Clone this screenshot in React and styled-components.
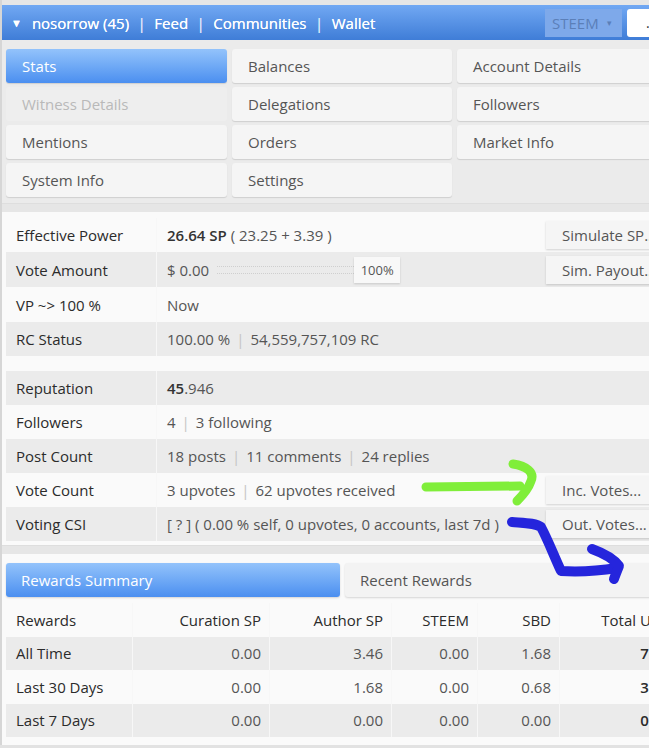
import React from 'react';
import styled, { createGlobalStyle } from 'styled-components';

const GlobalStyle = createGlobalStyle`
  html, body {
    margin: 0;
    padding: 0;
    overflow: hidden;
    background: #e2e2e2;
    font-family: 'Open Sans', 'Noto Sans', sans-serif;
  }
`;

// Page shell - wider than the window, so the right edge gets clipped
const Page = styled.div`
  position: relative;
  width: 684px;
  padding-top: 5px;
  border-left: 2px solid #d6d6d6;
  background: #e6e6e6;
`;

// Top navigation bar
const TopBar = styled.div`
  height: 35px;
  display: flex;
  align-items: center;
  padding: 0 0 0 9px;
  background: linear-gradient(#71a8f3, #3f7dd7);
  color: #fff;
  font-size: 15px;
  white-space: nowrap;
  text-shadow: 0 0 0.4px #fff;
`;

const Caret = styled.span`
  font-size: 11px;
  margin-right: 10px;
`;

const NavLinks = styled.div`
  flex: 1;
  display: flex;
  gap: 8.5px;
`;

const Sep = styled.span`
  color: #cfe0f8;
`;

const ChainSelect = styled.div`
  width: 77px;
  height: 28px;
  display: flex;
  align-items: center;
  justify-content: space-between;
  padding: 0 10px 0 7px;
  box-sizing: border-box;
  background: #7ea9ea;
  color: #5b7fb8;
  font-size: 15px;
  text-shadow: none;
  margin-right: 5px;
`;

const SearchBox = styled.div`
  width: 59px;
  height: 28px;
  box-sizing: border-box;
  background: #fff;
  border-radius: 3px 0 0 3px;
  color: #333;
  font-size: 14px;
  padding-left: 19px;
  line-height: 28px;
  text-shadow: none;
`;

// Menu of sections
const MenuPanel = styled.div`
  display: grid;
  grid-template-columns: 221px 220px 220px;
  grid-auto-rows: 34px;
  gap: 4px 5px;
  padding: 9px 4px 6px;
  background: #ebebeb;
`;

const MenuButton = styled.div`
  display: flex;
  align-items: center;
  padding-left: 16px;
  font-size: 15px;
  border-radius: 3px;
  color: ${props => props.active ? '#fff' : props.disabled ? '#b9b9b9' : '#555'};
  background: ${props => props.active
    ? 'linear-gradient(#93c3fb, #4b8ff0)'
    : props.disabled ? '#eeeeee' : '#f5f5f5'};
  box-shadow: ${props => props.disabled ? 'none' : '0 1px 1px rgba(0,0,0,0.12)'};
`;

const Gutter = styled.div`
  height: 8px;
  background: #e6e6e6;
  border-top: 1px solid #dedede;
`;

const Panel = styled.div`
  background: #fafafa;
  padding: ${props => props.pad || '6px 0 4px 4px'};
`;

const Table = styled.div`
  display: flex;
  flex-direction: column;
  margin-bottom: ${props => props.gap || '0'};
`;

const Row = styled.div`
  display: grid;
  grid-template-columns: ${props => props.cols};
  height: ${props => props.h || '34px'};
  background: ${props => props.shade ? '#ebebeb' : '#fafafa'};
`;

const Cell = styled.div`
  display: flex;
  align-items: center;
  justify-content: ${props => props.right ? 'flex-end' : 'flex-start'};
  padding: 0 ${props => props.right ? '8px' : '0'} 0 10px;
  border-right: 1px solid ${props => props.noLine ? 'transparent' : '#f7f7f7'};
  font-size: 15px;
  white-space: nowrap;
  color: ${props => props.label ? '#2b2b2b' : '#555'};
  font-weight: ${props => props.bold ? 600 : 400};
`;

const Strong = styled.b`
  color: #333;
  font-weight: 600;
`;

const Bar = styled.span`
  color: #c4c4c4;
  margin: 0 6px;
`;

const ValueCell = styled(Cell)`
  justify-content: space-between;
  padding-right: 14px;
  border-right: none;
`;

const ActionButton = styled.div`
  width: 126px;
  height: 28px;
  display: flex;
  align-items: center;
  padding-left: 16px;
  box-sizing: border-box;
  background: #f5f5f5;
  color: #555;
  font-size: 15px;
  box-shadow: 0 1px 2px rgba(0,0,0,0.16);
`;

const SliderWrap = styled.span`
  display: inline-flex;
  align-items: center;
  margin-left: 8px;
`;

const Track = styled.span`
  width: 137px;
  height: 6px;
  border-top: 1px dotted #cfcfcf;
  border-bottom: 1px dotted #cfcfcf;
`;

const Knob = styled.span`
  width: 46px;
  height: 26px;
  display: inline-flex;
  align-items: center;
  justify-content: center;
  background: #f8f8f8;
  box-shadow: 0 1px 2px rgba(0,0,0,0.15);
  font-size: 13px;
  color: #555;
`;

// Tabs for the rewards block
const Tabs = styled.div`
  display: grid;
  grid-template-columns: 334px 334px;
  gap: 5px;
  height: 34px;
  margin-bottom: 6px;
`;

const Tab = styled.div`
  display: flex;
  align-items: center;
  padding-left: 15px;
  font-size: 15px;
  border-radius: 3px;
  color: ${props => props.active ? '#fff' : '#555'};
  background: ${props => props.active ? 'linear-gradient(#93c3fb, #4b8ff0)' : '#f3f3f3'};
  box-shadow: 0 1px 2px rgba(0,0,0,0.15);
`;

// Hand-drawn marker strokes on top of the page
const Scribble = styled.svg`
  position: absolute;
  left: -2px;
  top: 0;
  pointer-events: none;
`;

const statsCols = '151px 1fr';
const rewardCols = '127px 137px 122px 86px 82px 119px';

const menu = [
  ['Stats', 'active'], ['Balances'], ['Account Details'],
  ['Witness Details', 'disabled'], ['Delegations'], ['Followers'],
  ['Mentions'], ['Orders'], ['Market Info'],
  ['System Info'], ['Settings'], null,
];

const rewards = [
  ['All Time', '0.00', '3.46', '0.00', '1.68', '7.12'],
  ['Last 30 Days', '0.00', '1.68', '0.00', '0.68', '3.55'],
  ['Last 7 Days', '0.00', '0.00', '0.00', '0.00', '0.00'],
];

export default function App() {
  return (
    <>
      <GlobalStyle />
      <Page>
        <TopBar>
          <Caret>▼</Caret>
          <NavLinks>
            <span>nosorrow (45)</span><Sep>|</Sep>
            <span>Feed</span><Sep>|</Sep>
            <span>Communities</span><Sep>|</Sep>
            <span>Wallet</span>
          </NavLinks>
          <ChainSelect>STEEM <span style={{ fontSize: 9 }}>▾</span></ChainSelect>
          <SearchBox>.</SearchBox>
        </TopBar>

        <MenuPanel>
          {menu.map((m, i) => m
            ? <MenuButton key={i} active={m[1] === 'active'} disabled={m[1] === 'disabled'}>{m[0]}</MenuButton>
            : <div key={i} />)}
        </MenuPanel>
        <Gutter />

        <Panel>
          <Table gap="15px">
            <Row cols={statsCols}>
              <Cell label>Effective Power</Cell>
              <ValueCell>
                <span><Strong>26.64 SP</Strong> ( 23.25 + 3.39 )</span>
                <ActionButton>Simulate SP...</ActionButton>
              </ValueCell>
            </Row>
            <Row cols={statsCols} shade h="35px">
              <Cell label>Vote Amount</Cell>
              <ValueCell>
                <span style={{ display: 'flex', alignItems: 'center' }}>
                  $ 0.00
                  <SliderWrap><Track /><Knob>100%</Knob></SliderWrap>
                </span>
                <ActionButton>Sim. Payout...</ActionButton>
              </ValueCell>
            </Row>
            <Row cols={statsCols} h="35px">
              <Cell label>VP ~&gt; 100 %</Cell>
              <ValueCell>Now</ValueCell>
            </Row>
            <Row cols={statsCols} shade>
              <Cell label>RC Status</Cell>
              <ValueCell><span>100.00 %<Bar>|</Bar>54,559,757,109 RC</span></ValueCell>
            </Row>
          </Table>

          <Table>
            <Row cols={statsCols} shade>
              <Cell label>Reputation</Cell>
              <ValueCell><span><Strong>45</Strong>.946</span></ValueCell>
            </Row>
            <Row cols={statsCols}>
              <Cell label>Followers</Cell>
              <ValueCell><span>4<Bar>|</Bar>3 following</span></ValueCell>
            </Row>
            <Row cols={statsCols} shade>
              <Cell label>Post Count</Cell>
              <ValueCell><span>18 posts<Bar>|</Bar>11 comments<Bar>|</Bar>24 replies</span></ValueCell>
            </Row>
            <Row cols={statsCols}>
              <Cell label>Vote Count</Cell>
              <ValueCell>
                <span>3 upvotes<Bar>|</Bar>62 upvotes received</span>
                <ActionButton>Inc. Votes...</ActionButton>
              </ValueCell>
            </Row>
            <Row cols={statsCols} shade>
              <Cell label>Voting CSI</Cell>
              <ValueCell>
                <span>[ ? ] ( 0.00 % self, 0 upvotes, 0 accounts, last 7d )</span>
                <ActionButton>Out. Votes...</ActionButton>
              </ValueCell>
            </Row>
          </Table>
        </Panel>
        <Gutter />

        <Panel pad="9px 0 8px 4px">
          <Tabs>
            <Tab active>Rewards Summary</Tab>
            <Tab>Recent Rewards</Tab>
          </Tabs>
          <Table>
            <Row cols={rewardCols} h="33.5px">
              <Cell label>Rewards</Cell>
              <Cell label right>Curation SP</Cell>
              <Cell label right>Author SP</Cell>
              <Cell label right>STEEM</Cell>
              <Cell label right>SBD</Cell>
              <Cell label right noLine>Total USD</Cell>
            </Row>
            {rewards.map((r, i) => (
              <Row key={r[0]} cols={rewardCols} h="33.5px" shade={i % 2 === 0}>
                <Cell label>{r[0]}</Cell>
                <Cell right>{r[1]}</Cell>
                <Cell right>{r[2]}</Cell>
                <Cell right>{r[3]}</Cell>
                <Cell right>{r[4]}</Cell>
                <Cell right noLine label bold>{r[5]}</Cell>
              </Row>
            ))}
          </Table>
        </Panel>

        <Scribble width="686" height="748" viewBox="0 0 686 748">
          <g fill="none" strokeLinecap="round" strokeLinejoin="round">
            <path d="M426 487 L520 486" stroke="#80ee3a" strokeWidth="9" />
            <path d="M513 464 C526 466 535 472 531 481 C528 490 522 496 517 501" stroke="#80ee3a" strokeWidth="9" />
            <path d="M512 522 C525 523 536 523 541 527 C548 540 554 556 561 571 C578 572 598 571 617 568" stroke="#2525dc" strokeWidth="10" />
            <path d="M592 549 C603 553 614 559 619 566 C617 571 615 576 614 579" stroke="#2525dc" strokeWidth="10" />
          </g>
        </Scribble>
      </Page>
    </>
  );
}
